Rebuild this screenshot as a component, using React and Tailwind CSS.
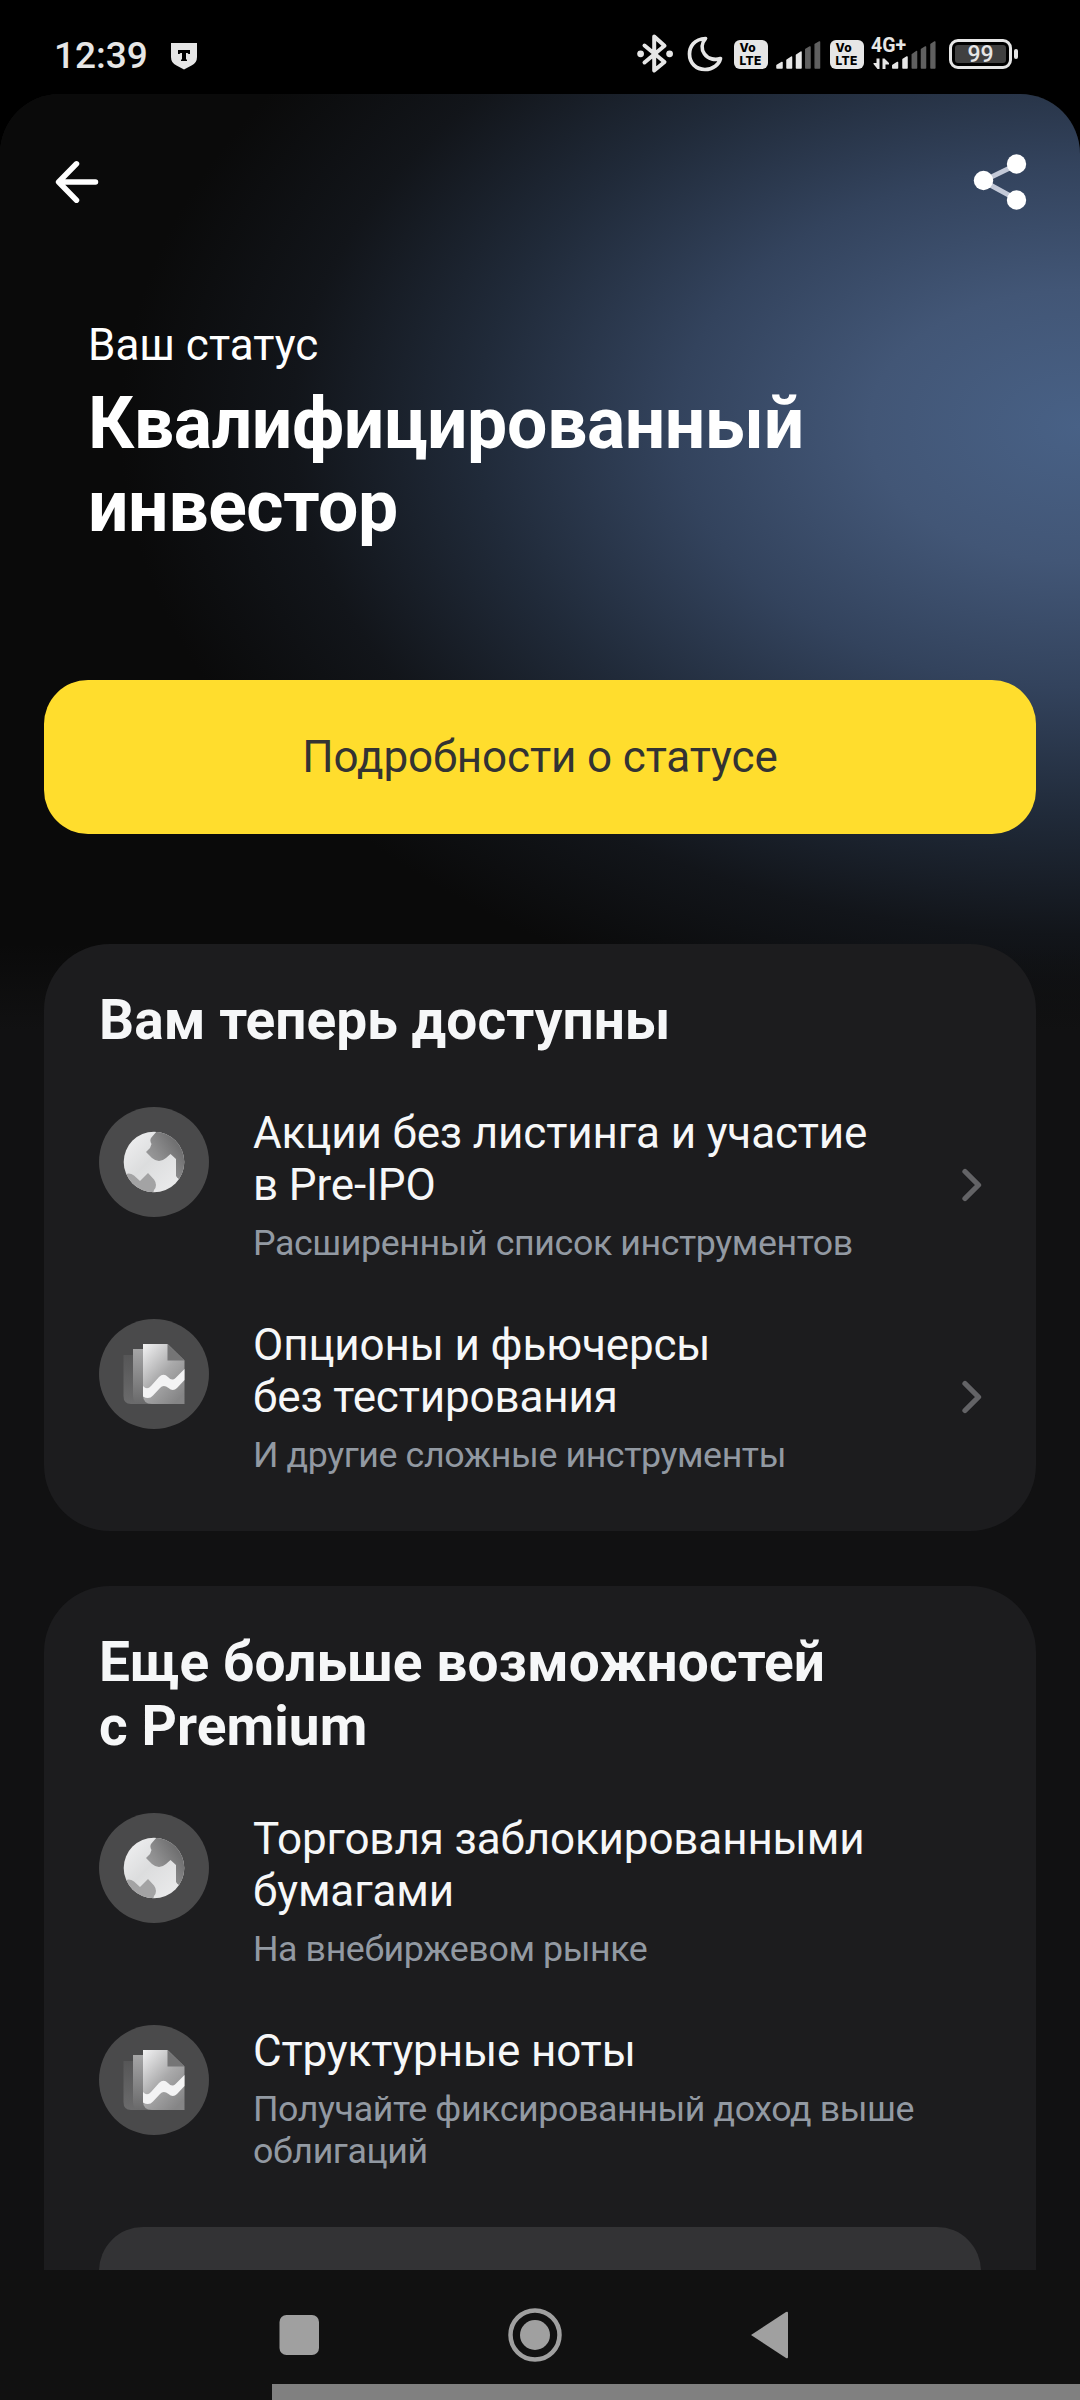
const VoLte = () => (
  <div className="flex h-[29px] w-[34px] flex-col items-start rounded-[6px] bg-[#e6e6e6] pt-[2px] pl-[5.5px] font-[Inter,sans-serif] text-[12px] leading-[12.5px] font-extrabold tracking-[0.3px] text-black">
    <span>Vo</span>
    <span>LTE</span>
  </div>
)

const GlobeIcon = () => (
  <svg width="110" height="110" viewBox="0 0 110 110">
    <defs>
      <linearGradient id="globe-land" x1="0" y1="0" x2="1" y2="1">
        <stop offset="0" stopColor="#f3f3f4" />
        <stop offset="0.45" stopColor="#dcddde" />
        <stop offset="1" stopColor="#eeeeef" />
      </linearGradient>
      <linearGradient id="globe-sea" x1="0" y1="1" x2="0.9" y2="0.3">
        <stop offset="0" stopColor="#a8a8a9" />
        <stop offset="0.45" stopColor="#8e8e8f" />
        <stop offset="1" stopColor="#656566" />
      </linearGradient>
      <clipPath id="globe-clip">
        <circle cx="55" cy="55" r="30.3" />
      </clipPath>
    </defs>
    <circle cx="55" cy="55" r="55" fill="#4a4a4b" />
    <g clipPath="url(#globe-clip)">
      <rect x="24" y="24" width="62" height="62" fill="url(#globe-land)" />
      <path d="M58 24L52 31Q50.500 34 52.500 37L51 41L47 45L53 51Q60 57 67 51L71.500 47L77 52V69Q78 71 80 72H90V20H60Z" fill="url(#globe-sea)" />
      <path d="M20 68L27 67Q31 65.500 35 68.500L41 74L49 66L55 72.500Q59 78 55 83L53 90H20Z" fill="#a3a3a4" />
    </g>
  </svg>
)

const NotesIcon = () => (
  <svg width="110" height="110" viewBox="0 0 110 110">
    <defs>
      <linearGradient id="note-page" x1="0" y1="0" x2="0.75" y2="1">
        <stop offset="0" stopColor="#f3f3f4" />
        <stop offset="0.55" stopColor="#a9a9aa" />
        <stop offset="1" stopColor="#858586" />
      </linearGradient>
      <linearGradient id="note-mid" x1="0" y1="0" x2="0" y2="1">
        <stop offset="0" stopColor="#a5a5a6" />
        <stop offset="1" stopColor="#69696a" />
      </linearGradient>
      <linearGradient id="note-back" x1="0" y1="0" x2="0" y2="1">
        <stop offset="0" stopColor="#565657" />
        <stop offset="1" stopColor="#6b6b6c" />
      </linearGradient>
    </defs>
    <circle cx="55" cy="55" r="55" fill="#4a4a4b" />
    <path d="M24.500 36H50V85H32Q24.500 85 24.500 77Z" fill="url(#note-back)" />
    <path d="M34 30H56V85H42Q34 85 34 77Z" fill="url(#note-mid)" />
    <path d="M44 25H68.500L85.500 41.500V85H53Q44 85 44 76Z" fill="url(#note-page)" />
    <path d="M68.500 25L85.500 41.500H68.500Z" fill="#757576" />
    <path d="M44 67Q48 71.500 52 67L60 58Q64.500 53.500 69 58Q73 62.500 76.500 59L85.500 50V61L78 69Q74 73 69.500 69Q64.500 65 61 69L54 76.500Q50 81 44 77.500Z" fill="#f3f3f4" />
  </svg>
)

const SECTIONS = [
  {
    key: 'available',
    title: ['Вам теперь доступны'],
    items: [
      {
        Icon: GlobeIcon,
        title: ['Акции без листинга и участие', 'в Pre-IPO'],
        note: ['Расширенный список инструментов'],
        chevron: true,
      },
      {
        Icon: NotesIcon,
        title: ['Опционы и фьючерсы', 'без тестирования'],
        note: ['И другие сложные инструменты'],
        chevron: true,
      },
    ],
  },
  {
    key: 'premium',
    title: ['Еще больше возможностей', 'с Premium'],
    items: [
      {
        Icon: GlobeIcon,
        title: ['Торговля заблокированными', 'бумагами'],
        note: ['На внебиржевом рынке'],
      },
      {
        Icon: NotesIcon,
        title: ['Структурные ноты'],
        note: ['Получайте фиксированный доход выше', 'облигаций'],
      },
    ],
  },
]

function Lines({ lines }) {
  return lines.map((line) => (
    <span key={line} className="block whitespace-nowrap">
      {line}
    </span>
  ))
}

function StatusBar() {
  return (
    <header className="flex h-[94px] shrink-0 items-start justify-between bg-black pt-[32px] pr-[62px] pl-[54px] text-[#e6e6e6]">
      <div className="flex items-center gap-[22px] pt-[2px]">
        <span className="text-[37px] leading-[44px] font-medium">12:39</span>
        <svg width="28" height="28" viewBox="0 0 28 28">
          <path d="M1 1H27V15Q27 21 21.500 23.500L14 27.500L6.500 23.500Q1 21 1 15Z" fill="#e6e6e6" />
          <path d="M8 8H20V12H18.500L17.500 11H16V17L17 18V19H11V18L12 17V11H10.500L9.500 12H8Z" fill="#000" />
        </svg>
      </div>

      <div className="flex items-start">
        <svg width="38" height="42" viewBox="0 0 38 42">
          <path d="M7.500 13.500L27.500 30L17.200 38.500V4.500L27.500 13.800L7.500 30.500" fill="none" stroke="#e6e6e6" strokeWidth="4" strokeLinejoin="round" strokeLinecap="round" />
          <circle cx="3.600" cy="21.800" r="3.400" fill="#e6e6e6" />
          <circle cx="32.600" cy="21.800" r="3.400" fill="#e6e6e6" />
        </svg>
        <svg width="38" height="40" viewBox="0 0 38 40" className="ml-[11px]" fill="none" stroke="#e6e6e6" strokeWidth="3.700" strokeLinejoin="round">
          <path d="M19.500 6.500C8 7 3.500 15 3.500 22C3.500 31 10 37.500 19 37.500C27 37.500 33 32.500 34.500 26.500C29 28.500 22 27 18.500 22C15 17 15.500 11 19.500 6.500Z" />
        </svg>
        <div className="mt-[8px] ml-[10px]">
          <VoLte />
        </div>
        <svg width="46" height="29" viewBox="0 0 46 29" className="mt-[8px] ml-[8px]" strokeWidth="1.500" strokeLinejoin="round">
          <path d="M1 28V25.500L6 22.500V28Z M11 28V20L15.500 17V28Z M20.500 28V15L25 12V28Z" fill="#e6e6e6" stroke="#e6e6e6" />
          <path d="M29.800 28V9.500L34 7V28Z M39.200 28V4.500L43.500 2V28Z" fill="#606060" stroke="#606060" />
        </svg>
        <div className="mt-[8px] ml-[8px]">
          <VoLte />
        </div>
        <div className="relative mt-[5px] ml-[7px] h-[33px] w-[66px]">
          <span className="absolute top-[-1px] left-0 text-[19.5px] leading-[20px] font-bold">4G+</span>
          <svg width="66" height="33" viewBox="0 0 66 33">
            <path d="M5.500 21.500H8.500V32H6.500L2.500 27V26H5.500Z M11.500 32V21.500H13.500L18 26V27.500H14.500V32Z" fill="#e6e6e6" />
            <g strokeWidth="1.500" strokeLinejoin="round">
              <path d="M21.800 31V28.500L26.500 25.500V31Z M32 31V22.500L36 20V31Z" fill="#e6e6e6" stroke="#e6e6e6" />
              <path d="M41.300 31V17.500L45.500 14.500V31Z M50.500 31V12.500L54.500 10V31Z M60 31V7.500L63.800 5V31Z" fill="#606060" stroke="#606060" />
            </g>
          </svg>
        </div>
        <div className="mt-[7px] ml-[12px] flex items-center gap-[2px]">
          <div className="h-[30px] w-[63px] rounded-[9px] border-[3px] border-[#e6e6e6] p-[3px]">
            <div className="flex h-full items-center justify-center rounded-[3px] bg-[#404040] text-[23px] leading-none font-medium">99</div>
          </div>
          <div className="h-[10px] w-[4px] rounded-[2px] bg-[#e6e6e6]" />
        </div>
      </div>
    </header>
  )
}

function Item({ item }) {
  const { Icon, title, note, chevron } = item
  return (
    <li className="flex items-start">
      <Icon />
      <div className="ml-[44px] flex-1">
        <p className="text-[44px] leading-[52px] tracking-[-0.14px] text-[#f6f7f8]">
          <Lines lines={title} />
        </p>
        <p className="mt-[11px] text-[35.75px] leading-[42px] tracking-[-0.4px] text-[#9299a2]">
          <Lines lines={note} />
        </p>
      </div>
      {chevron && (
        <svg width="22" height="36" viewBox="0 0 22 36" className="mt-[60px] -mr-[2px]" fill="none" stroke="#636366" strokeWidth="5.300" strokeLinecap="round" strokeLinejoin="round">
          <path d="M4 4.500L17.500 18L4 31.500" />
        </svg>
      )}
    </li>
  )
}

function Card({ section, className, children }) {
  return (
    <section className={`mx-[44px] rounded-t-[66px] bg-[#1c1c1e] px-[55px] pt-[44px] ${className}`}>
      <h2 className="text-[55px] leading-[64px] font-bold tracking-[0.08px] text-[#f6f7f8]">
        <Lines lines={section.title} />
      </h2>
      <ul className="mt-[55px] flex flex-col gap-[55px]">
        {section.items.map((item) => (
          <Item key={item.title[0]} item={item} />
        ))}
      </ul>
      {children}
    </section>
  )
}

export default function App() {
  return (
    <div className="flex h-[2400px] w-[1080px] flex-col overflow-hidden bg-black font-[Roboto,sans-serif]">
      <StatusBar />

      <main className="flex h-[2176px] shrink-0 flex-col overflow-hidden rounded-t-[60px] bg-[#111112]">
        <div className="-mb-[86px] flex h-[936px] shrink-0 flex-col bg-[#0a0a0a] bg-[linear-gradient(to_bottom,transparent_850px,#111112_936px),radial-gradient(ellipse_960px_620px_at_1080px_332px,#486186_0%,#425676_22%,#33435d_42%,#202a39_63%,#12151a_82%,#0a0a0a_100%)]">
          <nav className="flex items-start justify-between pt-[58px] pr-[50px] pl-[54px]">
            <svg width="46" height="60" viewBox="0 0 46 60" fill="none" stroke="#fff" strokeWidth="5.500" strokeLinecap="round" strokeLinejoin="round">
              <path d="M41.500 30H6M22.500 11.800L4.600 30L22.500 48.200" />
            </svg>
            <svg width="58" height="60" viewBox="0 0 58 60">
              <path d="M46 12L11 29L46 48" fill="none" stroke="#c3c9d8" strokeWidth="5" />
              <circle cx="11.500" cy="28.500" r="9.700" fill="#fff" />
              <circle cx="44.500" cy="12" r="9.700" fill="#fff" />
              <circle cx="44.500" cy="48" r="9.700" fill="#fff" />
            </svg>
          </nav>

          <p className="mt-[107px] ml-[88px] text-[44px] leading-[52px] text-white">Ваш статус</p>
          <h1 className="mt-[11px] ml-[88px] text-[71.5px] leading-[83px] font-bold tracking-[-0.4px] text-white">
            <Lines lines={['Квалифицированный', 'инвестор']} />
          </h1>

          <button className="mx-[44px] mt-[132px] h-[154px] shrink-0 rounded-[44px] bg-[#ffdd2d] text-[44px] tracking-[-0.13px] text-[#333]">
            Подробности о статусе
          </button>
        </div>

        <Card section={SECTIONS[0]} className="z-10 h-[587px] shrink-0 rounded-b-[66px]" />
        <Card section={SECTIONS[1]} className="mt-[55px] flex-1">
          <div className="mt-[55px] h-[154px] rounded-[44px] bg-[#333335]" />
        </Card>
      </main>

      <footer className="flex h-[130px] shrink-0 flex-col justify-between bg-[#111111]">
        <svg width="1080" height="114" viewBox="0 0 1080 114" fill="#a0a0a0">
          <rect x="279.500" y="45" width="39.500" height="40" rx="7" />
          <circle cx="535" cy="65" r="24.500" fill="none" stroke="#a0a0a0" strokeWidth="4.500" />
          <circle cx="535" cy="65" r="15" />
          <path d="M751 65L786 42Q788 41 788 43V87Q788 89 786 88Z" />
        </svg>
        <div className="ml-[272px] h-[16px] bg-[#808080]" />
      </footer>
    </div>
  )
}
